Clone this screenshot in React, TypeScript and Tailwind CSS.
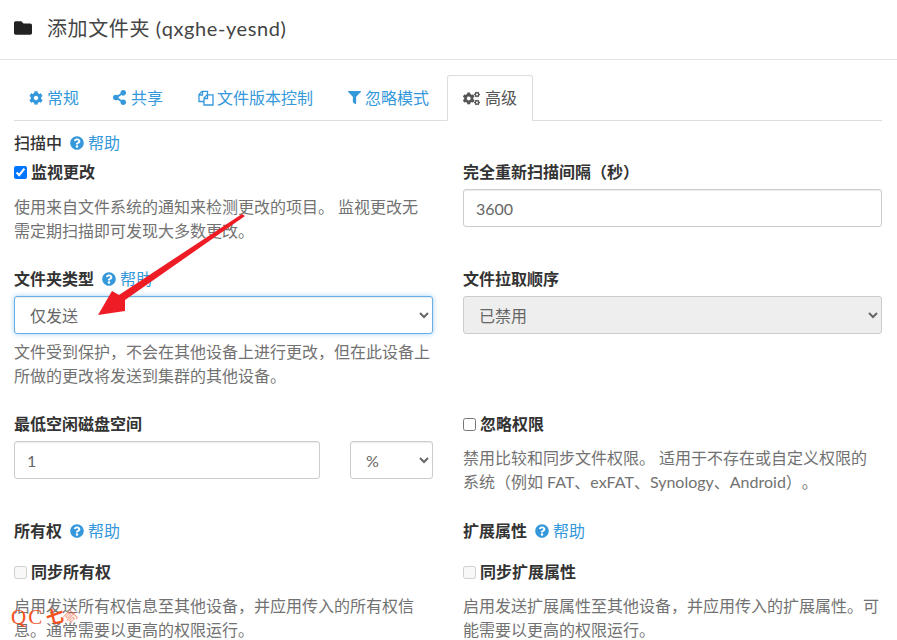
import React from "react";
import { FaCog, FaCogs, FaFilter, FaFolder, FaQuestionCircle, FaShareAlt } from "react-icons/fa";

const Help = () => (
  <a className="ml-[8px] inline-flex items-center gap-[4px] font-normal text-[#3498db]">
    <FaQuestionCircle className="text-[14px]" />
    <span>帮助</span>
  </a>
);

const Label = ({ children }: { children: React.ReactNode }) => (
  <div className="h-[24px] font-bold leading-[24px] text-[#333]">{children}</div>
);

const Muted = ({ children }: { children: React.ReactNode }) => (
  <p className="leading-[24px] text-[#727272]">{children}</p>
);

const Check = ({ label, checked, disabled }: { label: string; checked?: boolean; disabled?: boolean }) => (
  <label className="flex h-[24px] items-center font-bold leading-[24px] text-[#333]">
    <input type="checkbox" defaultChecked={checked} disabled={disabled} className="mr-[4px] ml-0 h-[13px] w-[13px]" />
    {label}
  </label>
);

const fieldClass =
  "block h-[38px] rounded-[3px] border border-[#ccc] bg-white px-[12px] text-[16px] text-[#666] shadow-[inset_0_1px_1px_rgba(0,0,0,0.075)] outline-none";

const selectClass =
  "block h-[38px] rounded-[3px] border bg-white pl-[11px] pr-0 text-[16px] text-[#666] outline-none";

const FilesIcon = () => (
  <svg width="16" height="16" viewBox="0 0 16 16" fill="none" stroke="currentColor" strokeWidth="1.3" aria-hidden="true">
    <path d="M6 11.5H1V4.5L4 1.3H9.5V5" />
    <path d="M4.5 1.5V5H1" />
    <path d="M6 15V8L9 4.8H15V15H6Z" />
    <path d="M9.5 5V8.5H6" />
  </svg>
);

const tabs = [
  { icon: <FaCog className="text-[14px]" />, label: "常规", cls: "gap-[4px] pl-[15px] pr-[14px]" },
  { icon: <FaShareAlt className="text-[15px]" />, label: "共享", cls: "gap-[4px] pl-[15px] pr-[16px]" },
  { icon: <FilesIcon />, label: "文件版本控制", cls: "gap-[3px] pl-[15px] pr-[16px]" },
  { icon: <FaFilter className="text-[13px]" />, label: "忽略模式", cls: "gap-[4px] pl-[15px] pr-[15px]" },
];

export default function App() {
  return (
    <div
      className="relative h-[640px] w-[897px] overflow-hidden bg-white text-[16px] text-[#333] [text-spacing-trim:space-all]"
      style={{ fontFamily: '"Lato", "Noto Sans CJK SC", sans-serif' }}
    >
      <header className="flex h-[60px] items-center border-b border-[#e5e5e5] pl-[14px] pb-[3px]">
        <FaFolder className="mr-[15px] text-[18px] text-[#222]" />
        <h4 className="text-[20px] font-normal tracking-[0.6px] text-[#444]">添加文件夹 (qxghe-yesnd)</h4>
      </header>

      <div className="pl-[14px] pr-[15px] pt-[15px]">
        <nav className="flex h-[46px] gap-[4px] border-b border-[#ddd]">
          {tabs.map((t) => (
            <a key={t.label} className={`flex h-[45px] items-center text-[#3498db] ${t.cls}`}>
              {t.icon}
              <span>{t.label}</span>
            </a>
          ))}
          <a className="-mb-px -ml-[1px] flex h-[46px] items-center gap-[5px] rounded-t-[3px] border border-[#ddd] border-b-white bg-white px-[15px] text-[#555]">
            <FaCogs className="text-[17px]" />
            <span>高级</span>
          </a>
        </nav>

        <div className="mt-[10px] grid grid-cols-2 gap-x-[30px]">
          <div>
            <div className="flex h-[24px] items-center font-medium leading-[24px] text-[#333]">
              扫描中
              <Help />
            </div>
            <div className="mt-[5px]">
              <Check label="监视更改" checked />
            </div>
            <div className="mt-[11px]">
              <Muted>使用来自文件系统的通知来检测更改的项目。 监视更改无需定期扫描即可发现大多数更改。</Muted>
            </div>
          </div>
          <div className="pt-[29px]">
            <Label>完全重新扫描间隔（秒）</Label>
            <input className={`${fieldClass} mt-[5px] w-full`} defaultValue="3600" />
          </div>
        </div>

        <div className="mt-[24px] grid grid-cols-2 gap-x-[30px]">
          <div>
            <div className="flex h-[24px] items-center font-bold leading-[24px] text-[#333]">
              文件夹类型
              <Help />
            </div>
            <select
              className={`${selectClass} mt-[5px] w-full border-[#66afe9] shadow-[inset_0_1px_1px_rgba(0,0,0,0.075),0_0_5px_rgba(102,175,233,0.6)]`}
              defaultValue="a"
            >
              <option value="a">仅发送</option>
            </select>
            <div className="mt-[6px]">
              <Muted>文件受到保护，不会在其他设备上进行更改，但在此设备上所做的更改将发送到集群的其他设备。</Muted>
            </div>
          </div>
          <div>
            <Label>文件拉取顺序</Label>
            <select disabled className={`${selectClass} mt-[5px] w-full border-[#ccc] !bg-[#eee] !text-[#666] opacity-100`}>
              <option>已禁用</option>
            </select>
          </div>
        </div>

        <div className="mt-[24px] grid grid-cols-2 gap-x-[30px]">
          <div>
            <Label>最低空闲磁盘空间</Label>
            <div className="mt-[5px] flex justify-between">
              <input className={`${fieldClass} w-[306px]`} defaultValue="1" />
              <select className={`${selectClass} w-[83px] border-[#ccc] shadow-[inset_0_1px_1px_rgba(0,0,0,0.075)]`}>
                <option>%</option>
              </select>
            </div>
          </div>
          <div>
            <Check label="忽略权限" />
            <div className="mt-[10px]">
              <Muted>禁用比较和同步文件权限。 适用于不存在或自定义权限的系统（例如 FAT、exFAT、Synology、Android）。</Muted>
            </div>
          </div>
        </div>

        <div className="mt-[25px] grid grid-cols-2 gap-x-[30px]">
          <div>
            <div className="flex h-[24px] items-center font-bold leading-[24px] text-[#333]">
              所有权
              <Help />
            </div>
            <div className="mt-[17px]">
              <Check label="同步所有权" disabled />
            </div>
            <div className="mt-[10px]">
              <Muted>启用发送所有权信息至其他设备，并应用传入的所有权信息。通常需要以更高的权限运行。</Muted>
            </div>
          </div>
          <div>
            <div className="flex h-[24px] items-center font-bold leading-[24px] text-[#333]">
              扩展属性
              <Help />
            </div>
            <div className="mt-[17px]">
              <Check label="同步扩展属性" disabled />
            </div>
            <div className="mt-[10px]">
              <Muted>启用发送扩展属性至其他设备，并应用传入的扩展属性。可能需要以更高的权限运行。</Muted>
            </div>
          </div>
        </div>
      </div>

      <svg className="pointer-events-none absolute left-0 top-0" width="897" height="640" aria-hidden="true">
        <polygon points="98,315 112,291 119,295 242,214 245,216 125,300 125,311" fill="#ee1c25" />
      </svg>
      <div
        className="pointer-events-none absolute left-[11px] top-[605px] flex h-[24px] items-center text-[#f4511e]"
        style={{ fontFamily: '"Liberation Serif", "Noto Sans CJK SC", serif' }}
      >
        <span className="text-[21px] leading-[24px] tracking-[2px]">QC</span>
        <span className="ml-[2px] -rotate-12 text-[18px] font-bold leading-[24px]">七</span>
        <span className="ml-[1px] -rotate-45 text-[13px] leading-[24px] opacity-60">哥</span>
      </div>
    </div>
  );
}
